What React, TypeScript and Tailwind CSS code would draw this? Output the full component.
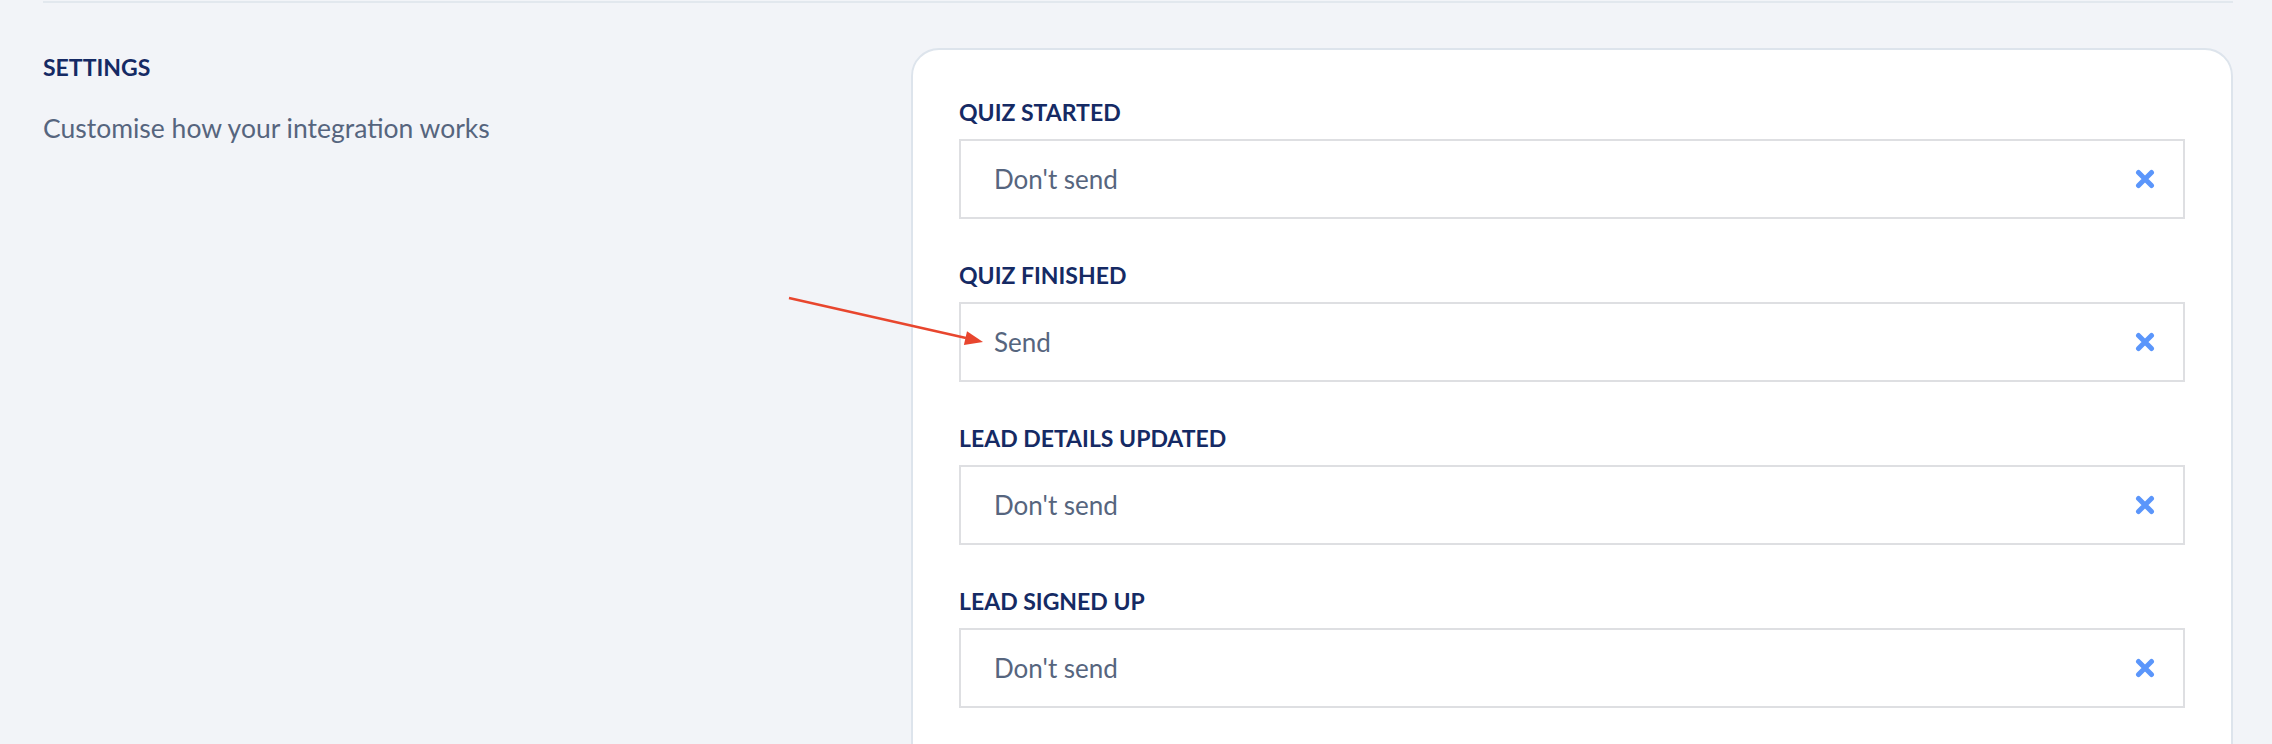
const settings = [
  { label: "QUIZ STARTED", value: "Don't send" },
  { label: "QUIZ FINISHED", value: "Send" },
  { label: "LEAD DETAILS UPDATED", value: "Don't send" },
  { label: "LEAD SIGNED UP", value: "Don't send" },
];

function ClearIcon() {
  return (
    <svg width="20" height="20" viewBox="0 0 20 20" className="shrink-0">
      <path
        d="M3.5 3.5 L16.5 16.5 M16.5 3.5 L3.5 16.5"
        stroke="#5b96fb"
        strokeWidth="5"
        strokeLinecap="round"
      />
    </svg>
  );
}

// red annotation arrow pointing at the "Send" value
function Arrow() {
  return (
    <svg
      className="absolute left-[780px] top-[290px] pointer-events-none"
      width="210"
      height="60"
      viewBox="0 0 210 60"
    >
      <line x1="9" y1="8" x2="186" y2="48" stroke="#e8462e" strokeWidth="2.5" />
      <polygon points="203,52 183.9,54.9 187,41.2" fill="#e8462e" />
    </svg>
  );
}

export default function App() {
  return (
    <div
      className="relative h-[744px] overflow-hidden bg-[#f2f4f8] pl-[43px] pr-[39px]"
      style={{ fontFamily: "Lato, 'Open Sans', sans-serif" }}
    >
      <div className="mt-px h-[2px] bg-[#e2e8ee]" />

      <div className="mt-[45px] flex">
        <div className="w-[868px] shrink-0 pt-[8px]">
          <h2 className="text-[23px] leading-[23px] font-bold text-[#152a64]">SETTINGS</h2>
          <p className="mt-[36px] text-[26.5px] leading-[26px] text-[#56657e]">
            Customise how your integration works
          </p>
        </div>

        <div className="flex-1 rounded-[28px] border-2 border-[#dde4ec] bg-white px-[46px] pt-[51px] pb-[48px]">
          {settings.map((s) => (
            <div key={s.label} className="mb-[45px]">
              <div className="mb-[15px] text-[23px] leading-[23px] font-bold text-[#152a64]">
                {s.label}
              </div>
              <div className="flex h-[80px] items-center justify-between border-2 border-[#dedfe2] pl-[33px] pr-[28px]">
                <span className="text-[26px] leading-[26px] text-[#56657e]">{s.value}</span>
                <ClearIcon />
              </div>
            </div>
          ))}
        </div>
      </div>

      <Arrow />
    </div>
  );
}
